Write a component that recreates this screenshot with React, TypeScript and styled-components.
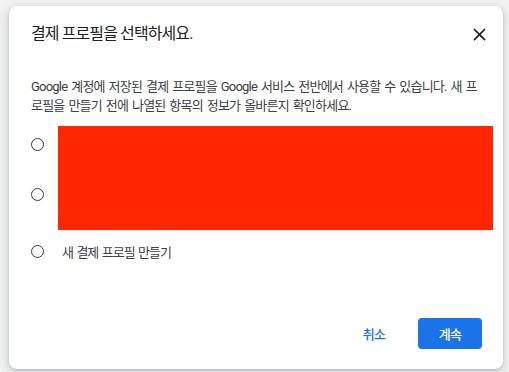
import React from 'react'
import styled, { createGlobalStyle } from 'styled-components'

const GlobalStyle = createGlobalStyle`
  html, body {
    margin: 0;
    padding: 0;
    background: #f2f2f2;
  }
  body {
    font-family: Roboto, "Noto Sans CJK KR", "Noto Sans", sans-serif;
    -webkit-font-smoothing: antialiased;
  }
`

const Page = styled.div`
  width: 509px;
  height: 372px;
  padding: 6px 0 0 9px;
  box-sizing: border-box;
  overflow: hidden;
`
const Dialog = styled.div`
  width: 494px;
  height: 363px;
  box-sizing: border-box;
  background: #fff;
  border-radius: 8px;
  box-shadow: 0 1px 3px rgba(60, 64, 67, 0.25), 0 4px 10px 3px rgba(60, 64, 67, 0.12);
  padding: 16px 21px 20px 22px;
  display: flex;
  flex-direction: column;
`
const Header = styled.div`
  display: flex;
  align-items: center;
  justify-content: space-between;
  height: 24px;
`
const Title = styled.h2`
  margin: 0;
  font-size: 16px;
  font-weight: 400;
  line-height: 24px;
  letter-spacing: -0.9px;
  color: #202124;
`
const CloseButton = styled.button`
  border: none;
  background: none;
  padding: 0;
  width: 21px;
  height: 21px;
  margin-right: -8px;
  display: flex;
  align-items: center;
  justify-content: center;
  color: #202124;
  cursor: pointer;
`
const Description = styled.p`
  margin: 31px 0 0;
  font-size: 13px;
  line-height: 19px;
  letter-spacing: -0.78px;
  word-spacing: 1.4px;
  word-break: break-all;
  color: #3c4043;
`
const Options = styled.div`
  margin-top: 11px;
  display: flex;
  flex-direction: column;
`
const SavedRow = styled.div`
  display: flex;
  gap: 14px;
`
const RadioColumn = styled.div`
  display: flex;
  flex-direction: column;
  gap: 37px;
  padding-top: 12px;
`
const Radio = styled.span`
  display: block;
  flex: none;
  width: 13px;
  height: 13px;
  box-sizing: border-box;
  border: 1px solid #3c3c3c;
  border-radius: 50%;
`
const Redacted = styled.div`
  flex: 1;
  height: 104px;
  margin-right: -11px;
  background: #ff2600;
`
const NewRow = styled.label`
  display: flex;
  align-items: center;
  gap: 18px;
  height: 42px;
  font-size: 13px;
  letter-spacing: -1px;
  word-spacing: 1.2px;
  color: #3c4043;
`
const Footer = styled.div`
  margin-top: auto;
  display: flex;
  justify-content: flex-end;
  gap: 12px;
`
const Button = styled.button<{ $primary?: boolean }>`
  height: 31px;
  min-width: 64px;
  padding: 0 16px;
  border: none;
  border-radius: 4px;
  font-family: inherit;
  font-size: 13px;
  font-weight: 500;
  letter-spacing: -0.6px;
  background: ${({ $primary }) => ($primary ? '#1a73e8' : 'transparent')};
  color: ${({ $primary }) => ($primary ? '#fff' : '#1a73e8')};
  cursor: pointer;
`

const CloseIcon = () => (
  <svg width="21" height="21" viewBox="0 0 24 24" fill="currentColor">
    <path d="M19 6.41L17.59 5 12 10.59 6.41 5 5 6.41 10.59 12 5 17.59 6.41 19 12 13.41 17.59 19 19 17.59 13.41 12z" />
  </svg>
)

const App = (): JSX.Element => {
  return (
    <Page>
      <GlobalStyle />
      <Dialog>
        <Header>
          <Title>결제 프로필을 선택하세요.</Title>
          <CloseButton aria-label="닫기">
            <CloseIcon />
          </CloseButton>
        </Header>
        <Description>
          Google 계정에 저장된 결제 프로필을 Google 서비스 전반에서 사용할 수 있습니다. 새
          프로필을 만들기 전에 나열된 항목의 정보가 올바른지 확인하세요.
        </Description>
        <Options>
          <SavedRow>
            <RadioColumn>
              <Radio />
              <Radio />
            </RadioColumn>
            <Redacted />
          </SavedRow>
          <NewRow>
            <Radio />새 결제 프로필 만들기
          </NewRow>
        </Options>
        <Footer>
          <Button>취소</Button>
          <Button $primary>계속</Button>
        </Footer>
      </Dialog>
    </Page>
  )
}

export default App
